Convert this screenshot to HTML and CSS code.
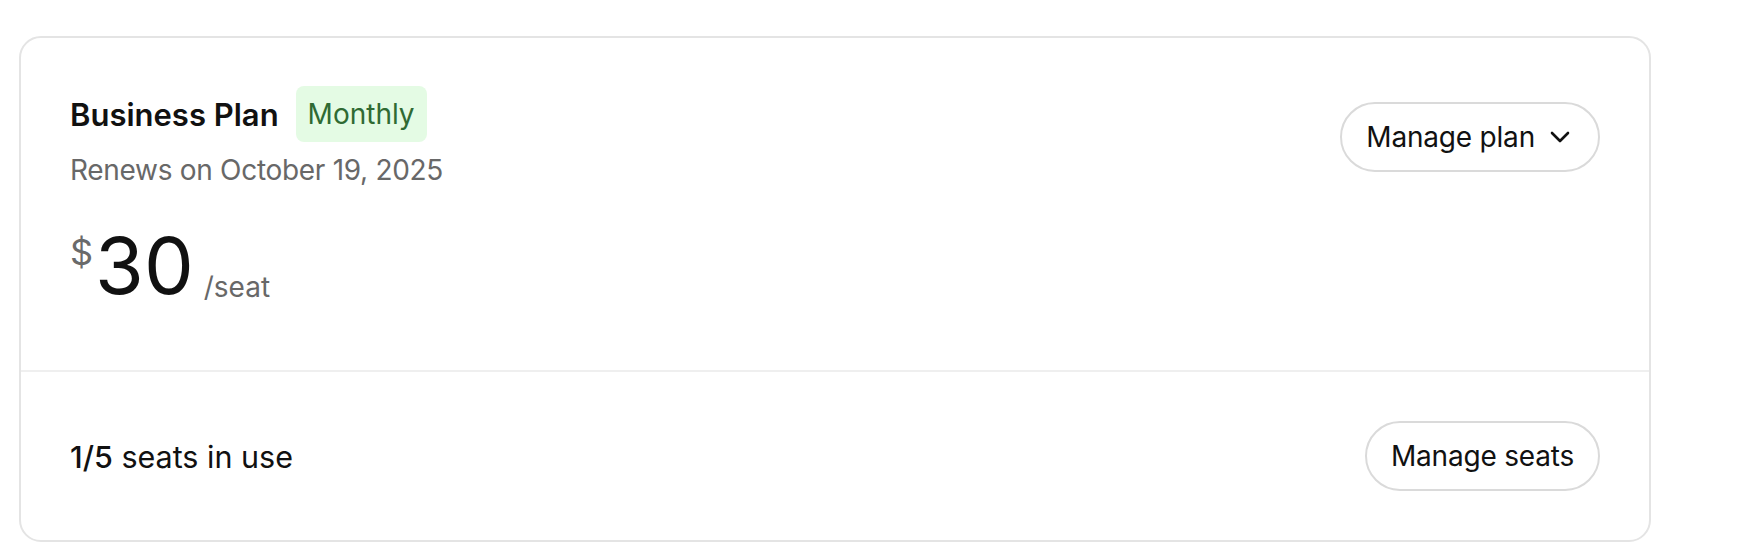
FILE: index.html
```html
<!DOCTYPE html>
<html lang="en">
<head>
    <meta charset="UTF-8">
    <meta name="viewport" content="width=device-width, initial-scale=1.0">
    <title>Billing</title>
    <link rel="stylesheet" href="styles.css">
</head>
<body>
    <div class="plan-card">
        <div class="plan-main">
            <div class="plan-header">
                <div class="plan-info">
                    <div class="plan-title-row">
                        <h2 class="plan-title">Business Plan</h2>
                        <span class="badge">Monthly</span>
                    </div>
                    <p class="plan-renews">Renews on October 19, 2025</p>
                </div>
                <button class="pill-btn pill-btn-menu" type="button">
                    Manage plan
                    <svg class="chevron" width="20" height="12" viewBox="0 0 20 12" aria-hidden="true">
                        <path d="M2 2l8 8 8-8" fill="none" stroke="#111" stroke-width="2.6" stroke-linecap="round" stroke-linejoin="round"/>
                    </svg>
                </button>
            </div>
            <div class="price">
                <span class="price-currency">$</span>
                <span class="price-amount">30</span>
                <span class="price-unit">/seat</span>
            </div>
        </div>
        <div class="plan-seats">
            <p class="seats-text"><span class="seats-count">1/5</span> seats in use</p>
            <button class="pill-btn" type="button">Manage seats</button>
        </div>
    </div>
</body>
</html>
```

FILE: styles.css
```css
body { margin: 0; padding: 36px 0 0 19px; background: #fff; font-family: Inter, "Noto Sans", sans-serif; color: #111; }
.plan-card { width: 1632px; box-sizing: border-box; border: 2px solid #e4e4e4; border-radius: 22px; background: #fff; }
.plan-main { padding: 48px 49px 66px; border-bottom: 2px solid #efefef; }
.plan-header { display: flex; align-items: center; justify-content: space-between; }
.plan-title-row { display: flex; align-items: center; gap: 17px; }
.plan-title { margin: 0; font-size: 31px; font-weight: 600; }
.badge { display: inline-flex; align-items: center; height: 56px; padding: 0 12px; border-radius: 8px; background: #e4fbe4; color: #2f6a33; font-size: 28px; }
.plan-renews { margin: 10px 0 0; font-size: 28px; line-height: 36px; letter-spacing: -0.3px; color: #686868; }
.price { display: flex; align-items: baseline; margin-top: 38px; white-space: nowrap; }
.price-currency { align-self: flex-start; margin: 8px 2px 0 0; font-size: 36px; line-height: 36px; color: #6a6a6a; }
.price-amount { font-size: 79px; line-height: 78px; font-weight: 400; color: #111; }
.price-unit { margin-left: 10px; font-size: 28px; line-height: 28px; color: #686868; transform: translateY(3px); }
.plan-seats { display: flex; align-items: center; justify-content: space-between; padding: 49px 49px; }
.seats-text { margin: 0; font-size: 30.5px; }
.seats-count { font-weight: 500; }
.pill-btn { display: inline-flex; align-items: center; gap: 14px; height: 70px; padding: 0 24px; border: 2px solid #dadada; border-radius: 35px; background: #fff; color: #111; font-family: inherit; font-size: 28px; letter-spacing: -0.2px; cursor: pointer; }
.pill-btn-menu { padding: 0 28px 0 24px; gap: 15px; }
.chevron { display: block; }
```
